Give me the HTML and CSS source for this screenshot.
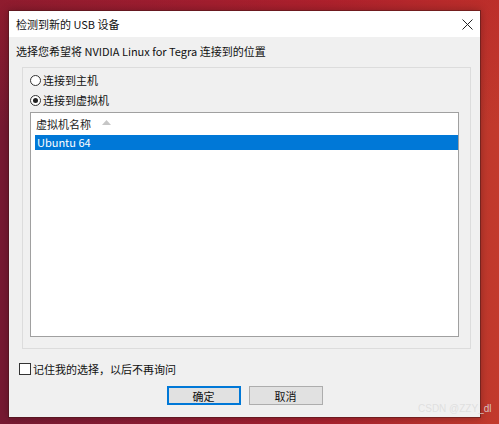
FILE: index.html
```html
<!DOCTYPE html>
<html lang="zh-CN">
<head>
<meta charset="utf-8">
<link rel="stylesheet" href="styles.css">
</head>
<body>
<div class="desktop">
  <div class="window">
    <div class="titlebar">
      <span class="title">检测到新的 USB 设备</span>
      <span class="close">
        <svg width="11" height="11" viewBox="0 0 11 11"><path d="M0.5 0.5L10.5 10.5M10.5 0.5L0.5 10.5" stroke="#222" stroke-width="1" fill="none"/></svg>
      </span>
    </div>
    <div class="body">
      <div class="prompt">选择您希望将 NVIDIA Linux for Tegra 连接到的位置</div>
      <div class="group">
        <label class="radio"><span class="dot"></span>连接到主机</label>
        <label class="radio"><span class="dot on"></span>连接到虚拟机</label>
        <div class="list">
          <div class="header">
            <span>虚拟机名称</span>
            <svg class="sort" width="9" height="5" viewBox="0 0 9 5"><path d="M0 5L4.5 0L9 5Z" fill="#c6c6c6"/></svg>
          </div>
          <div class="row sel">Ubuntu 64</div>
        </div>
      </div>
      <label class="check"><span class="box"></span>记住我的选择，以后不再询问</label>
      <div class="buttons">
        <button class="btn default">确定</button>
        <button class="btn">取消</button>
      </div>
    </div>
  </div>
  <div class="watermark">CSDN @ZZY_dl</div>
</div>
</body>
</html>
```
FILE: styles.css
```css
* { box-sizing: border-box; }
html, body { margin: 0; padding: 0; }
body {
  width: 499px;
  height: 424px;
  overflow: hidden;
  font-family: "Noto Sans CJK SC", "Noto Sans", sans-serif;
  font-size: 11px;
  color: #111;
}
.desktop {
  position: relative;
  width: 499px;
  height: 424px;
  background:
    linear-gradient(180deg, rgba(180,30,40,0.4) 0, rgba(180,30,40,0) 30%),
    linear-gradient(90deg, #761a32 0%, #8c1c34 30%, #a8222f 65%, #c23a2c 100%);
  padding: 10px 0 0 8px;
}
.window {
  width: 473px;
  height: 408px;
  display: flex;
  flex-direction: column;
  border: 1px solid rgba(60,20,20,0.55);
  box-shadow: 0 0 8px rgba(0,0,0,0.25);
}
.titlebar {
  height: 26px;
  background: #ffffff;
  display: flex;
  align-items: center;
  justify-content: space-between;
  padding-left: 7px;
}
.title { font-size: 11px; color: #111; }
.close {
  width: 26px;
  height: 26px;
  display: flex;
  align-items: center;
  justify-content: center;
}
.body {
  flex: 1;
  background: #f0f0f0;
  padding: 6px 9px 0 7px;
  display: flex;
  flex-direction: column;
}
.prompt { line-height: 16px; height: 16px; }
.group {
  margin: 8px 0 0 6px;
  height: 282px;
  border: 1px solid #dcdcdc;
  padding: 2px 11px 11px 7px;
  display: flex;
  flex-direction: column;
}
.radio {
  display: flex;
  align-items: center;
  height: 20px;
  line-height: 20px;
}
.dot {
  width: 11px;
  height: 11px;
  border: 1px solid #333;
  border-radius: 50%;
  background: #fff;
  margin-right: 2px;
  display: flex;
  align-items: center;
  justify-content: center;
}
.dot.on::after {
  content: "";
  width: 5px;
  height: 5px;
  border-radius: 50%;
  background: #222;
}
.list {
  margin-top: 2px;
  flex: 1;
  background: #fff;
  border: 1px solid #a0a0a0;
  padding: 0 0 0 4px;
}
.header {
  height: 22px;
  display: flex;
  align-items: center;
  padding-left: 1px;
  color: #222;
}
.sort { margin-left: 11px; margin-top: -3px; }
.row {
  height: 15px;
  line-height: 15px;
  padding-left: 2px;
}
.row.sel { background: #0078d7; color: #fff; }
.check {
  display: flex;
  align-items: center;
  margin-top: 13px;
  height: 14px;
  padding-left: 3px;
}
.box {
  width: 12px;
  height: 12px;
  border: 1px solid #333;
  background: #fff;
  margin-right: 2px;
}
.buttons {
  display: flex;
  justify-content: center;
  gap: 8px;
  margin-top: 10px;
  padding-left: 2px;
}
.btn {
  width: 74px;
  height: 19px;
  background: #e1e1e1;
  border: 1px solid #adadad;
  font-family: "Noto Sans CJK SC", "Noto Sans", sans-serif;
  font-size: 11px;
  color: #111;
  padding: 0;
  line-height: 16px;
}
.btn.default { border: 2px solid #0078d7; line-height: 14px; }
.watermark {
  position: absolute;
  left: 418px;
  top: 403px;
  font-family: "Liberation Sans", "Noto Sans", sans-serif;
  font-size: 10px;
  color: rgba(220,220,220,0.85);
}
```
